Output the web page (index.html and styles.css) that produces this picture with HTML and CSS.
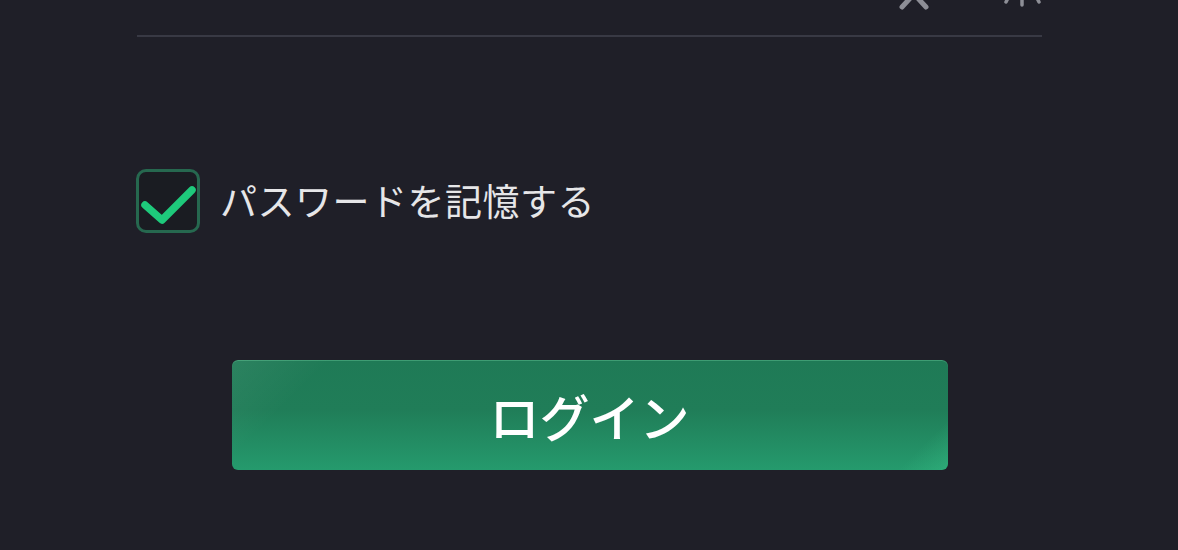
FILE: index.html
```html
<!DOCTYPE html>
<html lang="ja">
<head>
<meta charset="utf-8">
<link rel="stylesheet" href="styles.css">
</head>
<body>
<div class="form">
  <div class="field">
    <div class="field-icons">
      <svg class="icon-clear" width="34" height="10" viewBox="0 0 34 10"><path d="M17 -6 L5 7 M17 -6 L29 7" stroke="#8d8e96" stroke-width="5" stroke-linecap="round" fill="none"/></svg>
      <svg class="icon-eye" width="40" height="10" viewBox="0 0 40 10"><path d="M20 -4 V5 M7 -4 L4 2 M34 -4 L37 2" stroke="#8d8e96" stroke-width="3.5" stroke-linecap="round" fill="none"/></svg>
    </div>
  </div>
  <label class="remember">
    <span class="checkbox">
      <svg width="58" height="58" viewBox="0 0 58 58"><path d="M6 33 L23 48 L53 18" stroke="#1ec97b" stroke-width="7.5" stroke-linecap="round" stroke-linejoin="round" fill="none"/></svg>
    </span>
    <span class="remember-text">パスワードを記憶する</span>
  </label>
  <div class="actions">
    <button class="login">ログイン</button>
  </div>
</div>
</body>
</html>
```
FILE: styles.css
```css
html, body {
  margin: 0;
  padding: 0;
  background: #1f1f28;
  width: 1178px;
  height: 550px;
  overflow: hidden;
  font-family: "Noto Sans CJK JP", "Noto Sans", sans-serif;
}
.form {
  width: 905px;
  margin: 0 auto 0 137px;
  display: flex;
  flex-direction: column;
}
.field {
  height: 35px;
  border-bottom: 2px solid #383944;
  position: relative;
}
.field-icons {
  position: absolute;
  right: 0;
  top: 0;
  display: flex;
  gap: 71px;
}
.icon-clear { display: block; }
.icon-eye { display: block; }
.remember {
  display: flex;
  align-items: center;
  gap: 20px;
  margin-top: 132px;
  margin-left: -1px;
}
.checkbox {
  width: 58px;
  height: 58px;
  border: 3px solid #26684f;
  border-radius: 10px;
  background: #1a1c22;
  display: block;
  position: relative;
}
.checkbox svg { display: block; }
.remember-text {
  color: #e6e6e8;
  font-size: 37px;
  letter-spacing: 0.5px;
  line-height: 1;
  margin-top: -2px;
}
.actions {
  display: flex;
  justify-content: center;
  margin-top: 127px;
}
.login {
  width: 716px;
  height: 110px;
  border: none;
  border-radius: 6px;
  background:
    linear-gradient(135deg, rgba(255,255,255,0.06) 0%, rgba(255,255,255,0) 12%),
    linear-gradient(315deg, rgba(60,200,140,0.35) 0%, rgba(60,200,140,0) 6%),
    linear-gradient(180deg, #1f7a56 0%, #207d58 45%, #259a6d 100%);
  box-shadow: inset 0 1px 0 rgba(120,220,170,0.35);
  color: #ffffff;
  font-family: "Noto Sans CJK JP", "Noto Sans", sans-serif;
  font-size: 50px;
  font-weight: 500;
  letter-spacing: 0;
  padding: 0;
  cursor: pointer;
}
```
